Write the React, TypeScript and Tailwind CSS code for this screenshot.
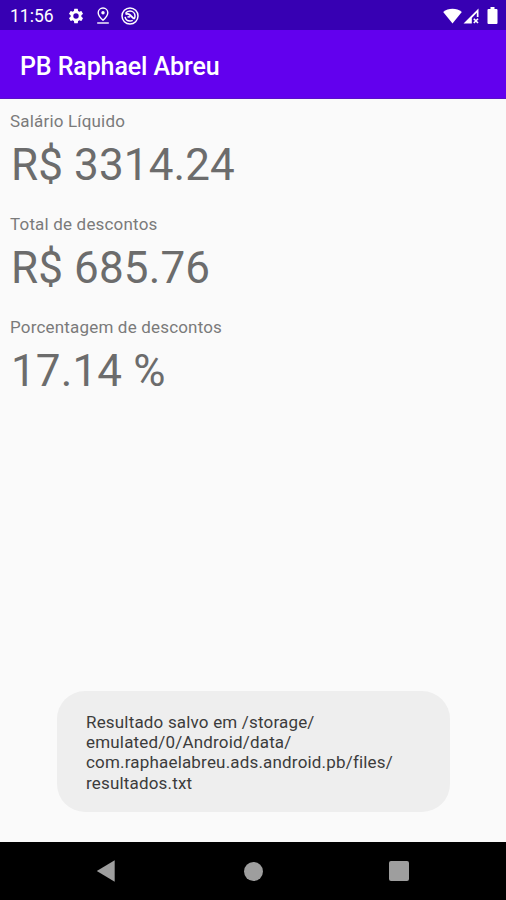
import React from 'react';

interface ResultItem {
  label: string;
  value: string;
}

const results: ResultItem[] = [
  { label: 'Salário Líquido', value: 'R$ 3314.24' },
  { label: 'Total de descontos', value: 'R$ 685.76' },
  { label: 'Porcentagem de descontos', value: '17.14 %' },
];

function StatusBar() {
  return (
    <div className="flex h-[30px] shrink-0 items-center bg-[#3700b3] pl-[10px] pr-[8px] pt-px text-white">
      <span className="w-[57px] pt-[2px] text-[17.5px] font-normal leading-none">11:56</span>

      {/* Settings */}
      <svg className="h-[18px] w-[18px]" viewBox="0 0 24 24" fill="currentColor">
        <path d="M19.14 12.94c.04-.3.06-.61.06-.94s-.02-.64-.07-.94l2.03-1.58a.49.49 0 0 0 .12-.61l-1.92-3.32a.49.49 0 0 0-.59-.22l-2.39.96a7 7 0 0 0-1.62-.94l-.36-2.54a.48.48 0 0 0-.48-.41h-3.84a.47.47 0 0 0-.47.41l-.36 2.54c-.59.24-1.13.57-1.62.94l-2.39-.96a.48.48 0 0 0-.59.22L2.74 8.87a.47.47 0 0 0 .12.61l2.03 1.58a7.4 7.4 0 0 0 0 1.88l-2.03 1.58a.49.49 0 0 0-.12.61l1.92 3.32c.12.22.37.29.59.22l2.39-.96c.5.38 1.03.7 1.62.94l.36 2.54c.05.24.24.41.48.41h3.84c.24 0 .44-.17.47-.41l.36-2.54a6.8 6.8 0 0 0 1.62-.94l2.39.96c.22.08.47 0 .59-.22l1.92-3.32a.47.47 0 0 0-.12-.61zM12 15.6a3.6 3.6 0 1 1 0-7.2 3.6 3.6 0 0 1 0 7.2z" />
      </svg>

      {/* Location */}
      <svg className="ml-[9px] h-[18px] w-[18px]" viewBox="0 0 18 18" fill="none" stroke="currentColor" strokeWidth="1.4">
        <path d="M9 13.2C6.2 10.8 4.2 8.6 4.2 5.8a4.8 4.8 0 0 1 9.6 0c0 2.8-2 5-4.8 7.4z" />
        <circle cx="9" cy="5.8" r="1.7" fill="currentColor" stroke="none" />
        <path d="M3.2 16h11.6" />
      </svg>

      {/* Do not track */}
      <svg className="ml-[9px] h-[18px] w-[18px]" viewBox="0 0 18 18" fill="none" stroke="currentColor" strokeWidth="1.5">
        <circle cx="9" cy="9" r="8" />
        <path d="M4.5 6.3C5.5 4.8 7.1 4 9 4c2.8 0 5 2.1 5 5 0 1.2-.3 2.2-1 3M4.1 9.8c.4 2.5 2.4 4.2 4.9 4.2 1 0 1.9-.3 2.7-.7" />
        <path d="M4.5 7.2c2-.6 3.3-.3 4.5.8l4 3.8" strokeWidth="1.8" />
        <path d="M6.5 9.9h2.7" />
      </svg>

      <div className="ml-auto flex items-center">
        <svg className="h-[16px] w-[19px]" viewBox="0 0 19 16" fill="currentColor">
          <path d="M9.5 15.5.2 4.1C2.8 1.9 6 .8 9.5.8s6.7 1.1 9.3 3.3z" />
        </svg>
        <svg className="ml-px h-[16px] w-[16px]" viewBox="0 0 16 16" fill="none" stroke="currentColor">
          <path d="M.5 15.5 15.5.5V9h-1.7V4.8L8.8 10v5.5z" fill="currentColor" stroke="none" />
          <path d="m10.8 10.7 4.2 4.3m0-4.3L10.8 15" strokeWidth="1.6" />
        </svg>
        <svg className="ml-[8px] h-[17px] w-[11px]" viewBox="0 0 10 17" fill="currentColor">
          <path d="M3 0h4v2h2a1 1 0 0 1 1 1v13a1 1 0 0 1-1 1H1a1 1 0 0 1-1-1V3a1 1 0 0 1 1-1h2z" />
        </svg>
      </div>
    </div>
  );
}

function NavigationBar() {
  return (
    <div className="flex h-[58px] shrink-0 items-center bg-black pl-[96px] text-[#9e9e9e]">
      <svg className="h-[22px] w-[19px]" viewBox="0 0 19 22" fill="currentColor">
        <path d="M.8 11 18.7.3v21.4z" />
      </svg>
      <div className="ml-[129px] h-[19px] w-[19px] rounded-full bg-[#9e9e9e]" />
      <div className="ml-[126px] h-[20px] w-[20px] rounded-[2px] bg-[#9e9e9e]" />
    </div>
  );
}

export default function App() {
  return (
    <div className="flex h-[900px] w-[506px] flex-col overflow-hidden bg-[#fafafa] font-['Roboto',sans-serif]">
      <StatusBar />

      <header className="flex h-[69px] shrink-0 items-center border-b border-[#5a10c8] bg-[#6200ee] pl-[20px] pt-[4px]">
        <h1 className="text-[25px] font-medium leading-none tracking-[-0.1px] text-white">PB Raphael Abreu</h1>
      </header>

      <main className="flex flex-1 flex-col pl-[10px] pt-[11px]">
        {results.map((item) => (
          <section key={item.label} className="h-[103px]">
            <p className="text-[17px] leading-[23px] tracking-[0.18px] text-[#7a7a7a]">{item.label}</p>
            <p className="pl-px pt-px text-[44px] leading-[62px] tracking-[0.12px] text-[#6c6c6c]">{item.value}</p>
          </section>
        ))}

        {/* Toast */}
        <div className="mb-[30px] ml-[47px] mt-auto h-[121px] w-[393px] rounded-[28px] bg-[#eee] pl-[29px] pt-[21px] text-[17px] leading-[20.2px] tracking-[0.18px] text-[#3c3c3c]">
          <p>Resultado salvo em /storage/</p>
          <p>emulated/0/Android/data/</p>
          <p>com.raphaelabreu.ads.android.pb/files/</p>
          <p>resultados.txt</p>
        </div>
      </main>

      <NavigationBar />
    </div>
  );
}
